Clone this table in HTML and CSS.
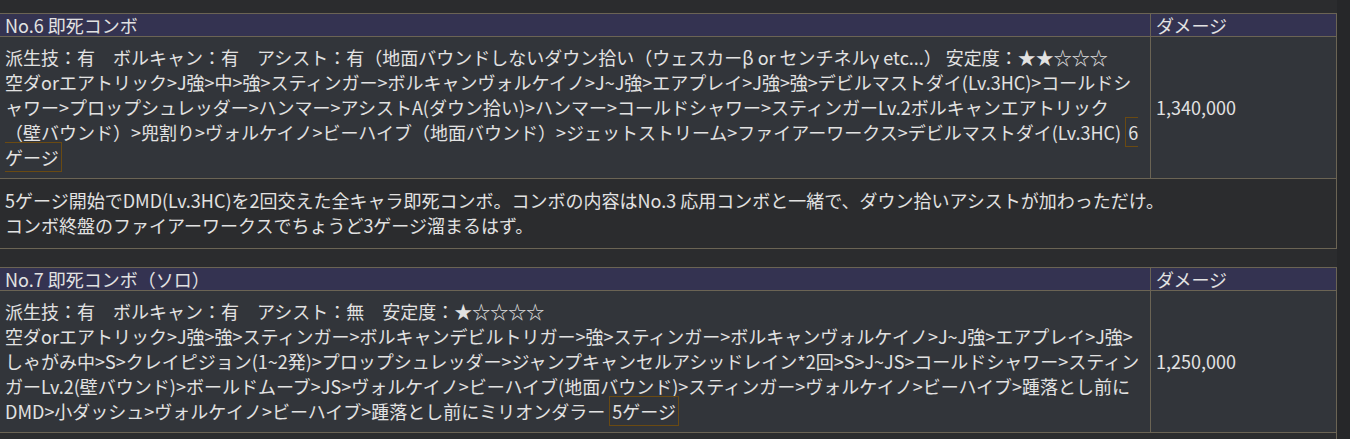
FILE: index.html
```html
<!DOCTYPE html>
<html lang="ja">
<head>
<meta charset="utf-8">
<title>即死コンボ</title>
<link rel="stylesheet" href="styles.css">
</head>
<body>
<div class="page">
  <table class="combo">
    <colgroup><col class="col-route"><col class="col-dmg"></colgroup>
    <thead>
      <tr><th>No.6 即死コンボ</th><th>ダメージ</th></tr>
    </thead>
    <tbody>
      <tr class="main">
        <td class="route">派生技：有　ボルキャン：有　アシスト：有（地面バウンドしないダウン拾い（ウェスカーβ or センチネルγ etc...） 安定度：★★☆☆☆<br>空ダorエアトリック&gt;J強&gt;中&gt;強&gt;スティンガー&gt;ボルキャンヴォルケイノ&gt;J~J強&gt;エアプレイ&gt;J強&gt;強&gt;デビルマストダイ(Lv.3HC)&gt;コールドシャワー&gt;プロップシュレッダー&gt;ハンマー&gt;アシストA(ダウン拾い)&gt;ハンマー&gt;コールドシャワー&gt;スティンガーLv.2ボルキャンエアトリック<br>（壁バウンド）&gt;兜割り&gt;ヴォルケイノ&gt;ビーハイブ（地面バウンド）&gt;ジェットストリーム&gt;ファイアーワークス&gt;デビルマストダイ(Lv.3HC) <span class="gauge">6ゲージ</span></td>
        <td class="damage">1,340,000</td>
      </tr>
      <tr class="note">
        <td colspan="2">5ゲージ開始でDMD(Lv.3HC)を2回交えた全キャラ即死コンボ。コンボの内容はNo.3 応用コンボと一緒で、ダウン拾いアシストが加わっただけ。<br>コンボ終盤のファイアーワークスでちょうど3ゲージ溜まるはず。</td>
      </tr>
    </tbody>
  </table>

  <table class="combo">
    <colgroup><col class="col-route"><col class="col-dmg"></colgroup>
    <thead>
      <tr><th>No.7 即死コンボ（ソロ）</th><th>ダメージ</th></tr>
    </thead>
    <tbody>
      <tr class="main">
        <td class="route">派生技：有　ボルキャン：有　アシスト：無　安定度：★☆☆☆☆<br>空ダorエアトリック&gt;J強&gt;強&gt;スティンガー&gt;ボルキャンデビルトリガー&gt;強&gt;スティンガー&gt;ボルキャンヴォルケイノ&gt;J~J強&gt;エアプレイ&gt;J強&gt;しゃがみ中&gt;S&gt;クレイピジョン(1~2発)&gt;プロップシュレッダー&gt;ジャンプキャンセルアシッドレイン*2回&gt;S&gt;J~JS&gt;コールドシャワー&gt;スティンガーLv.2(壁バウンド)&gt;ボールドムーブ&gt;JS&gt;ヴォルケイノ&gt;ビーハイブ(地面バウンド)&gt;スティンガー&gt;ヴォルケイノ&gt;ビーハイブ&gt;踵落とし前にDMD&gt;小ダッシュ&gt;ヴォルケイノ&gt;ビーハイブ&gt;踵落とし前にミリオンダラー <span class="gauge">5ゲージ</span></td>
        <td class="damage">1,250,000</td>
      </tr>
      <tr class="note">
        <td colspan="2">&nbsp;<br>&nbsp;</td>
      </tr>
    </tbody>
  </table>
</div>
</body>
</html>
```

FILE: styles.css
```css
html, body {
  margin: 0;
  padding: 0;
}

body {
  background: #262729;
  color: #e2e2e2;
  font-family: "Noto Sans CJK JP", "Noto Sans", sans-serif;
  font-size: 18px;
  line-height: 25px;
}

.page {
  width: 1337px;
  min-height: 439px;
  background: #2b2c2e;
  padding-top: 13px;
  overflow: hidden;
}

.combo {
  width: 1338px;
  margin: 0 0 18px -1px;
  border-collapse: collapse;
  table-layout: fixed;
}

.col-dmg {
  width: 186px;
}

.combo th,
.combo td {
  border: 1px solid #6b6454;
  padding: 0 5px;
  text-align: left;
  vertical-align: middle;
}

.combo th {
  background: #343351;
  font-weight: normal;
  line-height: 22px;
}

.main td {
  background: #32353a;
  padding-top: 8px;
  padding-bottom: 8px;
}

.note td {
  background: #2b2c2e;
  padding-top: 9px;
  padding-bottom: 10px;
}

.gauge {
  border: 1px solid #6a4a12;
  padding: 1px 2px;
}
```
